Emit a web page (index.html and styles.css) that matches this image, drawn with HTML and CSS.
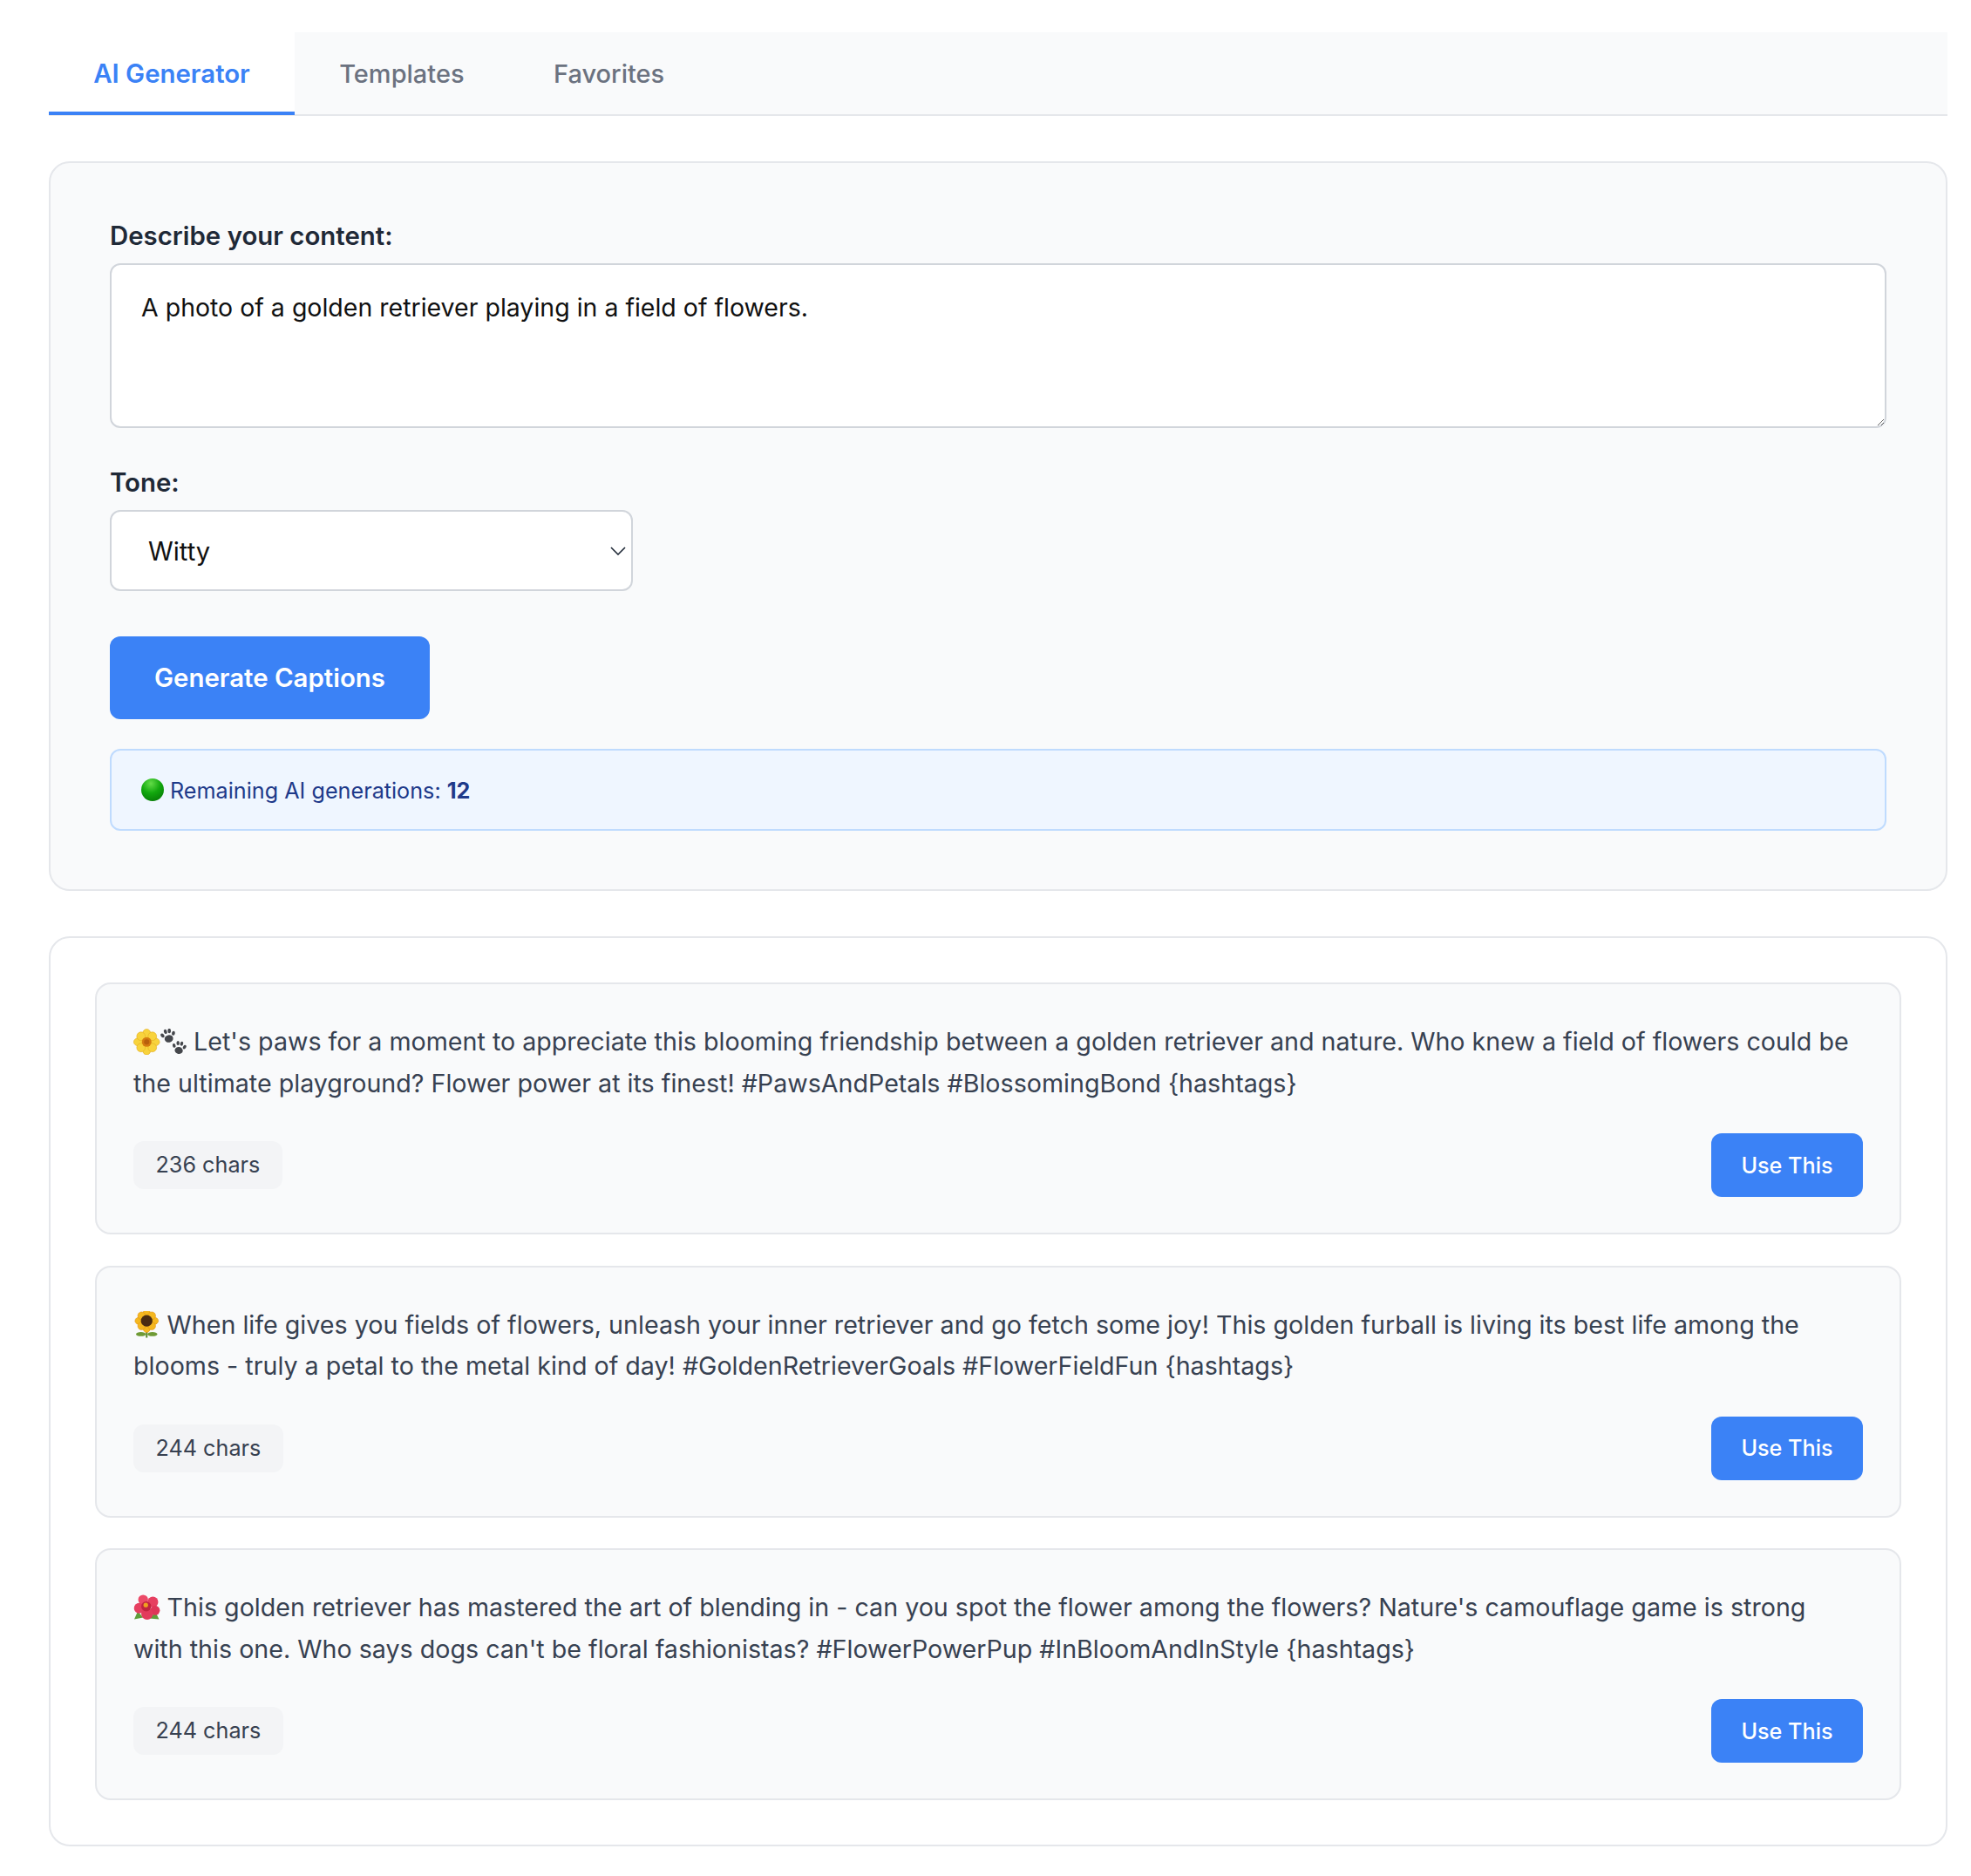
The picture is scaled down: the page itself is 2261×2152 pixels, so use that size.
FILE: index.html
```html
<!DOCTYPE html>
<html lang="en">
<head>
<meta charset="utf-8">
<title>AI Caption Generator</title>
<link rel="stylesheet" href="styles.css">
</head>
<body>
<svg class="defs" width="0" height="0" aria-hidden="true">
  <defs>
    <radialGradient id="green" cx="42%" cy="22%" r="85%"><stop offset="0" stop-color="#63dc48"/><stop offset=".5" stop-color="#12a80e"/><stop offset="1" stop-color="#067a06"/></radialGradient>
    <g id="paw"><ellipse cx="12" cy="16" rx="5.4" ry="4.6"/><ellipse cx="5" cy="10.5" rx="2" ry="2.8" transform="rotate(-25 5 10.5)"/><ellipse cx="9.6" cy="6.5" rx="2" ry="2.9" transform="rotate(-8 9.6 6.5)"/><ellipse cx="14.6" cy="6.5" rx="2" ry="2.9" transform="rotate(8 14.6 6.5)"/><ellipse cx="19" cy="10.5" rx="2" ry="2.8" transform="rotate(25 19 10.5)"/></g>
    <g id="petals"><ellipse cx="15" cy="6" rx="4.6" ry="5.6"/><ellipse cx="15" cy="24" rx="4.6" ry="5.6"/><ellipse cx="6" cy="15" rx="5.6" ry="4.6"/><ellipse cx="24" cy="15" rx="5.6" ry="4.6"/><ellipse cx="8.6" cy="8.6" rx="4.8" ry="4.8"/><ellipse cx="21.4" cy="8.6" rx="4.8" ry="4.8"/><ellipse cx="8.6" cy="21.4" rx="4.8" ry="4.8"/><ellipse cx="21.4" cy="21.4" rx="4.8" ry="4.8"/></g>
  </defs>
</svg>
<main class="app">
  <nav class="tabs">
    <button class="tab tab-active">AI Generator</button>
    <button class="tab">Templates</button>
    <button class="tab">Favorites</button>
  </nav>

  <section class="panel form-panel">
    <label class="label" for="desc">Describe your content:</label>
    <textarea class="desc" id="desc">A photo of a golden retriever playing in a field of flowers.</textarea>
    <label class="label" for="tone">Tone:</label>
    <div class="select-wrap">
      <select class="tone" id="tone"><option>Witty</option></select>
      <svg class="chevron" viewBox="0 0 18 10" width="18" height="10"><path d="M1 1l8 8 8-8" fill="none" stroke="#1f2937" stroke-width="1.6"/></svg>
    </div>
    <button class="generate">Generate Captions</button>
    <div class="quota">
      <svg class="dot" viewBox="0 0 28 28"><circle cx="14" cy="14" r="14" fill="url(#green)"/></svg>
      <span class="quota-text">Remaining AI generations: <strong>12</strong></span>
    </div>
  </section>

  <section class="panel results">
    <article class="card">
      <p class="caption"><svg class="emoji" viewBox="0 0 30 30"><use href="#petals" fill="#f8d33c" stroke="#e3ad22" stroke-width=".6"/><circle cx="15" cy="15" r="5.4" fill="#d47a10"/><circle cx="15" cy="15" r="3" fill="#b85f0c"/></svg><svg class="emoji" viewBox="0 0 30 30"><use href="#paw" fill="#45474c" transform="translate(-2 -3) scale(.9) rotate(-12 12 12)"/><use href="#paw" fill="#45474c" transform="translate(11 11) scale(.85) rotate(8 12 12)"/></svg> Let's paws for a moment to appreciate this blooming friendship between a golden retriever and nature. Who knew a field of flowers could be the ultimate playground? Flower power at its finest! #PawsAndPetals #BlossomingBond {hashtags}</p>
      <div class="card-foot"><span class="chars">236 chars</span><button class="use">Use This</button></div>
    </article>
    <article class="card">
      <p class="caption"><svg class="emoji" viewBox="0 0 30 30"><path d="M15 21v9" stroke="#5b8a2a" stroke-width="2"/><ellipse cx="8.5" cy="26" rx="5.5" ry="2.4" fill="#6f9a35"/><ellipse cx="21.5" cy="26" rx="5.5" ry="2.4" fill="#6f9a35"/><g transform="translate(1.5 -2.5) scale(.9)"><use href="#petals" fill="#f5b81f" stroke="#e08f12" stroke-width=".6"/><circle cx="15" cy="15" r="7.2" fill="#4a2c12"/></g></svg> When life gives you fields of flowers, unleash your inner retriever and go fetch some joy! This golden furball is living its best life among the blooms - truly a petal to the metal kind of day! #GoldenRetrieverGoals #FlowerFieldFun {hashtags}</p>
      <div class="card-foot"><span class="chars">244 chars</span><button class="use">Use This</button></div>
    </article>
    <article class="card">
      <p class="caption"><svg class="emoji" viewBox="0 0 30 30"><path d="M1 28 5 19l6 7zM29 28l-4-8-7 7z" fill="#5f9e3a"/><circle cx="11" cy="6" r="5.6" fill="#ec4a68"/><circle cx="22" cy="8.5" r="6" fill="#e63f60"/><circle cx="6.5" cy="15.5" r="5.8" fill="#e63f60"/><circle cx="24.5" cy="18" r="5.4" fill="#df3558"/><circle cx="15.5" cy="22" r="6.6" fill="#e23a5c"/><circle cx="14.5" cy="13.5" r="5.6" fill="#c0243f"/><circle cx="14" cy="12" r="2.6" fill="#f0a020"/></svg> This golden retriever has mastered the art of blending in - can you spot the flower among the flowers? Nature's camouflage game is strong with this one. Who says dogs can't be floral fashionistas? #FlowerPowerPup #InBloomAndInStyle {hashtags}</p>
      <div class="card-foot"><span class="chars">244 chars</span><button class="use">Use This</button></div>
    </article>
  </section>
</main>
</body>
</html>
```
FILE: styles.css
```css
* { box-sizing: border-box; }
html, body { margin: 0; background: #fff; }
body { font-family: Inter, "Liberation Sans", sans-serif; color: #1f2937; }
.defs { position: absolute; }
.app { padding: 37px 27px 34px 56px; display: flex; flex-direction: column; }

.tabs { display: flex; height: 96px; background: #f9fafb; border-bottom: 2px solid #e5e7eb; margin-bottom: 52px; }
.tab { font: 500 29px/1 Inter, sans-serif; color: #6b7280; background: transparent; border: 0; padding: 0 51.2px; height: 95px; }
.tab-active { font-weight: 600; font-size: 29.4px; color: #3b82f6; background: #fff; border-bottom: 4px solid #3b82f6; padding-top: 4px; }

.panel { border: 2px solid #e5e7eb; border-radius: 24px; }
.form-panel { background: #f9fafb; padding: 66px 68px 0; height: 837px; margin-bottom: 52px; display: flex; flex-direction: column; align-items: flex-start; }

.label { font-size: 29.4px; line-height: 35px; font-weight: 600; color: #1f2937; margin-bottom: 14px; }
.desc { display: block; width: 100%; height: 189px; border: 2px solid #d1d5db; border-radius: 12px; padding: 31px 34px; font: 400 28.5px/35px Inter, sans-serif; color: #111; background: #fff; margin-bottom: 45px; }
.select-wrap { position: relative; width: 600px; margin-bottom: 52px; }
.tone { display: block; width: 100%; height: 93px; appearance: none; border: 2px solid #d1d5db; border-radius: 12px; background: #fff; padding: 2px 42px 0; font: 400 29.2px Inter, sans-serif; color: #111; }
.chevron { position: absolute; right: 8px; top: 42px; }
.generate { width: 367px; height: 95px; border: 0; border-radius: 12px; background: #3b82f6; color: #fff; font: 600 29.4px Inter, sans-serif; margin-bottom: 34px; }
.quota { width: 100%; height: 94px; display: flex; align-items: center; gap: 7px; padding: 0 34px; background: #eff6ff; border: 2px solid #bfdbfe; border-radius: 12px; font-size: 25.2px; color: #1e3a8a; }
.quota-text { padding-top: 2px; }
.dot { width: 26px; height: 26px; flex: none; }
.quota strong { font-weight: 700; }

.results { background: #fff; padding: 51px; height: 1044px; display: flex; flex-direction: column; gap: 35.5px; }
.card { background: #f9fafb; border: 2px solid #e5e7eb; border-radius: 18px; padding: 42px 42px 0; height: 289px; }
.caption { margin: 0; padding-right: 5px; font-size: 28.65px; line-height: 47.5px; color: #374151; }
.emoji { width: 30.5px; height: 30.5px; vertical-align: -5px; }
.card-foot { display: flex; align-items: center; justify-content: space-between; margin-top: 34px; }
.chars { display: block; padding: 0 25.5px; height: 55px; line-height: 55px; background: #f3f4f6; border-radius: 12px; font-size: 25.2px; color: #374151; }
.use { width: 174px; height: 73px; border: 0; border-radius: 12px; background: #3b82f6; color: #fff; font: 500 25.2px Inter, sans-serif; }
```
